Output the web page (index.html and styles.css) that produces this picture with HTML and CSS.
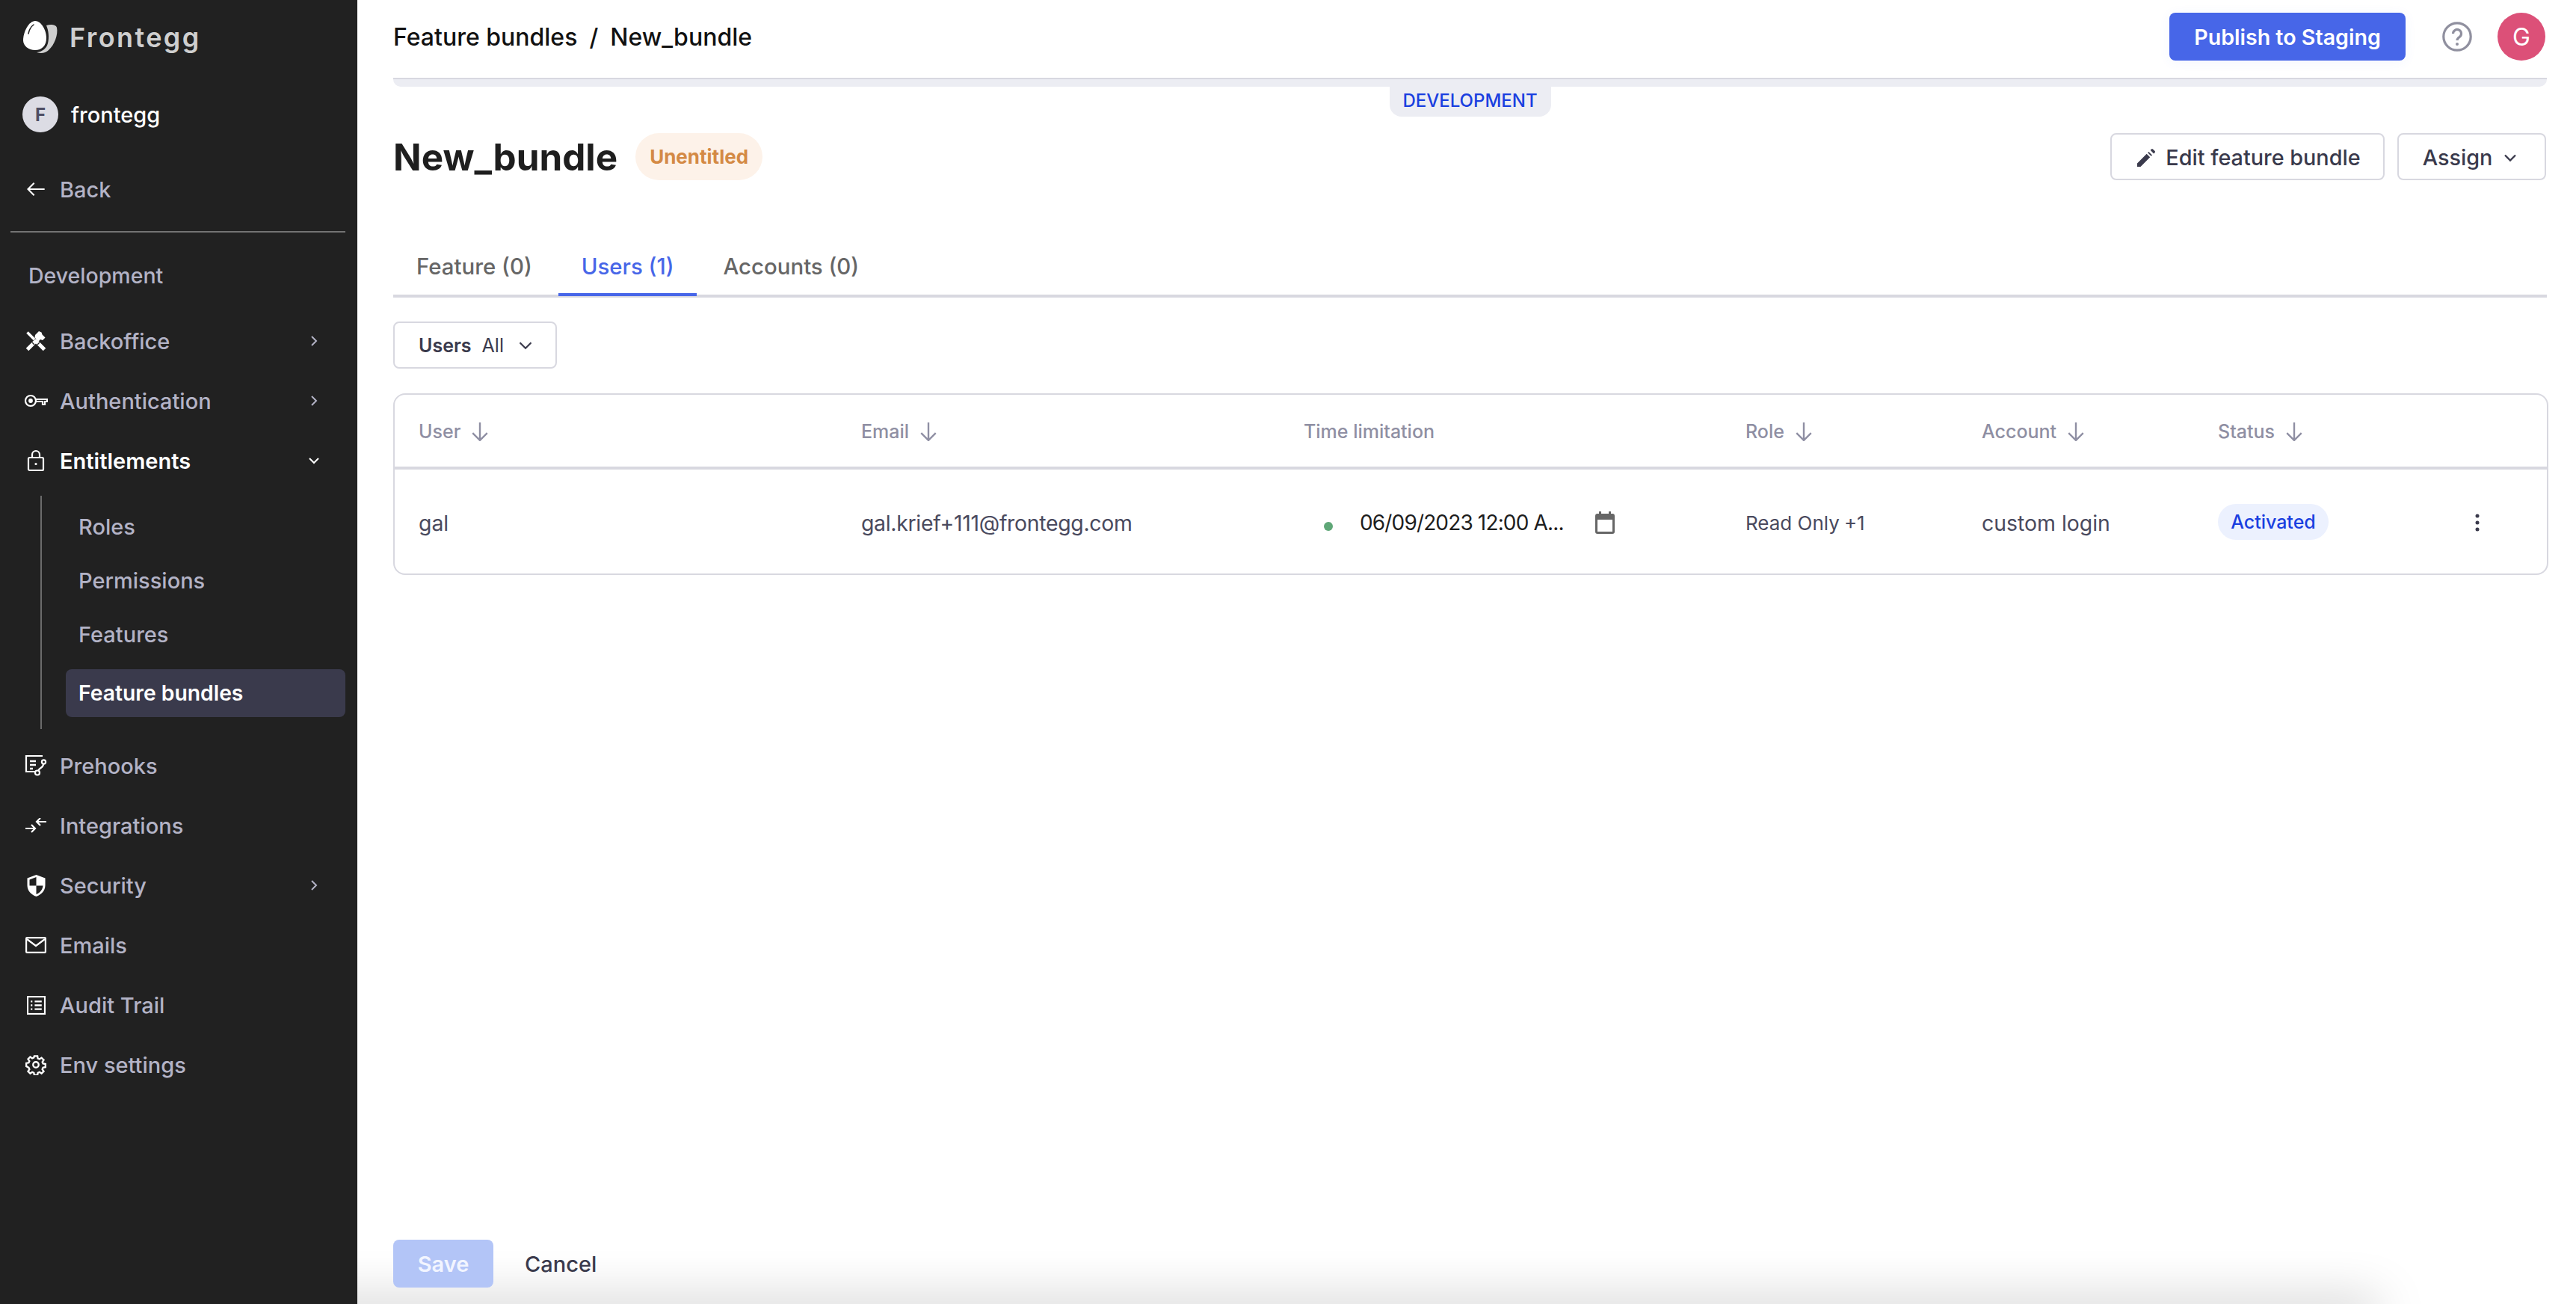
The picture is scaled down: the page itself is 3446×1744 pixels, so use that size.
FILE: index.html
```html
<!DOCTYPE html>
<html lang="en">
<head>
<meta charset="utf-8">
<title>New_bundle</title>
<link rel="stylesheet" href="styles.css">
</head>
<body>
<div class="app">
  <aside class="sidebar">
    <div class="brand">
      <svg class="logo" viewBox="0 0 48 46" width="48" height="46"><path fill="#cfcfcf" d="M32 7c6-2 13-1 14 3 2 9-3 23-11 30-4 4-10 5-16 3 8-1 13-5 15-12 2-8 1-17-2-24z"/><path fill="#fff" d="M17 1c8 0 15 12 15 23 0 10-6 16-15 16S1 34 1 27C1 15 9 1 17 1z"/><path fill="none" stroke="#212121" stroke-width="1.5" stroke-linecap="round" d="M8 18c1-5 3-9 7-12"/></svg>
      <span class="brand-name">Frontegg</span>
    </div>
    <div class="org">
      <span class="org-badge">F</span>
      <span class="org-name">frontegg</span>
    </div>
    <div class="back">
      <span class="nav-icon"><svg viewBox="0 0 24 24" width="28" height="28" fill="none" stroke="#fff" stroke-width="1.8"><path d="M22 12H3M10 5l-7 7 7 7"/></svg></span>
      <span>Back</span>
    </div>
    <div class="divider"></div>
    <div class="env">Development</div>
    <nav class="nav">
      <div class="nav-row"><span class="nav-icon"><svg viewBox="0 0 28 28" width="28" height="28" fill="none" stroke="#fff"><path stroke-width="5" d="M2.500 25.500L15 13"/><path stroke-width="5" d="M25.500 25.500L13 13"/><path stroke-width="3.600" d="M2.500 2.500L12 12"/><path fill="#fff" stroke="none" d="M13 6l5-5 3.500 1.500 1 3 4 4-3.500 3.500-3-1-2.500 2.500-5-5z"/><path stroke="#212121" stroke-width="1.400" d="M9 16l3 3M16 19l3-3"/></svg></span><span class="nav-label">Backoffice</span><svg class="chev" viewBox="0 0 24 24" width="24" height="24" fill="none" stroke="#b3b3c6" stroke-width="2"><path d="M9 6l6 6-6 6"/></svg></div>
      <div class="nav-row"><span class="nav-icon"><svg viewBox="0 0 32 24" width="32" height="24" fill="none" stroke="#fff" stroke-width="2.200"><circle cx="9" cy="12" r="7"/><circle cx="9" cy="12" r="1.800" fill="#fff"/><path d="M16 10h15v3h-3v4h-3v-4h-9"/></svg></span><span class="nav-label">Authentication</span><svg class="chev" viewBox="0 0 24 24" width="24" height="24" fill="none" stroke="#b3b3c6" stroke-width="2"><path d="M9 6l6 6-6 6"/></svg></div>
      <div class="nav-row is-open"><span class="nav-icon"><svg viewBox="0 0 24 30" width="24" height="30" fill="none" stroke="#fff" stroke-width="2.200"><rect x="2" y="11" width="20" height="17" rx="1.500"/><path d="M7 11V7a5 5 0 0 1 10 0v4"/><circle cx="12" cy="19.500" r="1.600" fill="#fff" stroke="none"/></svg></span><span class="nav-label">Entitlements</span><svg class="chev" viewBox="0 0 24 24" width="24" height="24" fill="none" stroke="#fff" stroke-width="2"><path d="M6 9l6 6 6-6"/></svg></div>
      <div class="sub">
        <div class="sub-row">Roles</div>
        <div class="sub-row">Permissions</div>
        <div class="sub-row">Features</div>
        <div class="sub-row is-active">Feature bundles</div>
      </div>
      <div class="nav-row"><span class="nav-icon"><svg viewBox="0 0 30 28" width="30" height="28" fill="none" stroke="#fff" stroke-width="2.200"><path d="M24 1H2v21h12"/><path d="M7 8h8M7 13h8M7 18h4" stroke-width="2.400"/><circle cx="25.500" cy="9" r="2.600"/><circle cx="17" cy="23.500" r="3"/><path d="M25 12c0 5-5 4-7 9"/></svg></span><span class="nav-label">Prehooks</span></div>
      <div class="nav-row"><span class="nav-icon"><svg viewBox="0 0 28 20" width="28" height="20" fill="none" stroke="#fff" stroke-width="2.200"><path d="M0 14h12M8 9l5 5-5 5M28 5H16M20 0l-5 5 5 5"/></svg></span><span class="nav-label">Integrations</span></div>
      <div class="nav-row"><span class="nav-icon"><svg viewBox="0 0 24 29" width="25" height="29" fill="#fff"><path d="M12 0L0 4.500V14c0 7 5 12.500 12 15 7-2.500 12-8 12-15V4.500zm0 14.500H3V6.500L12 3zm0 0h9c-.5 5.500-4 9.500-9 11.500z"/></svg></span><span class="nav-label">Security</span><svg class="chev" viewBox="0 0 24 24" width="24" height="24" fill="none" stroke="#b3b3c6" stroke-width="2"><path d="M9 6l6 6-6 6"/></svg></div>
      <div class="nav-row"><span class="nav-icon"><svg viewBox="0 0 28 22" width="28" height="22" fill="none" stroke="#fff" stroke-width="2.200"><rect x="1.100" y="1.100" width="25.800" height="19.800" rx="1"/><path d="M2 3l12 9 12-9"/></svg></span><span class="nav-label">Emails</span></div>
      <div class="nav-row"><span class="nav-icon"><svg viewBox="0 0 24 24" width="25" height="25" fill="none" stroke="#fff" stroke-width="2"><rect x="1" y="1" width="22" height="22"/><path d="M5 7h2M10 7h9M5 12h2M10 12h9M5 17h2M10 17h9" stroke-width="2.200"/></svg></span><span class="nav-label">Audit Trail</span></div>
      <div class="nav-row"><span class="nav-icon"><svg viewBox="0 0 24 24" width="28" height="28" fill="none" stroke="#fff" stroke-width="2"><circle cx="12" cy="12" r="3.200"/><path d="M10.200 2h3.600l.5 2.800 1.900.8 2.300-1.600 2.500 2.500-1.600 2.300.8 1.900 2.800.5v3.600l-2.800.5-.8 1.900 1.600 2.300-2.500 2.500-2.300-1.600-1.900.8-.5 2.800h-3.600l-.5-2.800-1.900-.8-2.300 1.600-2.500-2.500 1.600-2.300-.8-1.900L1 13.800v-3.600l2.800-.5.8-1.900L3 5.500 5.500 3l2.300 1.600 1.900-.8z"/></svg></span><span class="nav-label">Env settings</span></div>
    </nav>
  </aside>

  <main class="main">
    <header class="topbar">
      <div class="crumbs"><span>Feature bundles</span><span>/</span><span>New_bundle</span></div>
      <div class="top-actions">
        <button class="btn-primary">Publish to Staging</button>
        <svg class="help" viewBox="0 0 40 40" width="40" height="40"><circle cx="20" cy="20" r="18.200" fill="none" stroke="#90909f" stroke-width="3.200"/><path d="M14.500 16a5.500 5.500 0 1 1 8.500 4.600c-2 1.300-3 2.300-3 4.400" fill="none" stroke="#90909f" stroke-width="3.200"/><circle cx="20" cy="30" r="2" fill="#90909f"/></svg>
        <span class="avatar">G</span>
      </div>
    </header>
    <div class="env-band"><span class="env-tag">DEVELOPMENT</span></div>

    <section class="page-head">
      <div class="title-wrap">
        <h1 class="title">New_bundle</h1>
        <span class="badge">Unentitled</span>
      </div>
      <div class="head-actions">
        <button class="btn-outline btn-edit"><svg viewBox="0 0 24 24" width="32" height="32" fill="#3a3a4c"><path d="M3 17.600V21h3.400L15.900 11.500 12.500 8.100zM13.600 7l3.400 3.400 1-1-3.400-3.400zM16.200 4.400l3.400 3.400 1.100-1.100a1 1 0 0 0 0-1.400l-2-2a1 1 0 0 0-1.400 0z"/></svg>Edit feature bundle</button>
        <button class="btn-outline btn-assign">Assign<svg viewBox="0 0 24 24" width="28" height="28" fill="none" stroke="#3a3a4c" stroke-width="2"><path d="M6 9l6 6 6-6"/></svg></button>
      </div>
    </section>

    <div class="tabs">
      <div class="tab">Feature (0)</div>
      <div class="tab is-active">Users (1)</div>
      <div class="tab">Accounts (0)</div>
    </div>

    <div class="filter-row">
      <button class="filter"><span class="filter-name">Users</span><span class="filter-value">All</span><svg viewBox="0 0 24 24" width="30" height="30" fill="none" stroke="#3a3a4c" stroke-width="1.800"><path d="M6 9l6 6 6-6"/></svg></button>
    </div>

    <div class="table">
      <div class="tr th">
        <div class="cell">User<svg class="sort" viewBox="0 0 24 24" width="26" height="26" fill="none" stroke="#8f8fa3" stroke-width="2.200"><path d="M12 1v22M3 14l9 9 9-9"/></svg></div>
        <div class="cell">Email<svg class="sort" viewBox="0 0 24 24" width="26" height="26" fill="none" stroke="#8f8fa3" stroke-width="2.200"><path d="M12 1v22M3 14l9 9 9-9"/></svg></div>
        <div class="cell">Time limitation</div>
        <div class="cell">Role<svg class="sort" viewBox="0 0 24 24" width="26" height="26" fill="none" stroke="#8f8fa3" stroke-width="2.200"><path d="M12 1v22M3 14l9 9 9-9"/></svg></div>
        <div class="cell">Account<svg class="sort" viewBox="0 0 24 24" width="26" height="26" fill="none" stroke="#8f8fa3" stroke-width="2.200"><path d="M12 1v22M3 14l9 9 9-9"/></svg></div>
        <div class="cell">Status<svg class="sort" viewBox="0 0 24 24" width="26" height="26" fill="none" stroke="#8f8fa3" stroke-width="2.200"><path d="M12 1v22M3 14l9 9 9-9"/></svg></div>
      </div>
      <div class="tr td">
        <div class="cell">gal</div>
        <div class="cell cell-email">gal.krief+111@frontegg.com</div>
        <div class="cell cell-time">
          <span class="dot"></span>
          <span class="date">06/09/2023 12:00 A...</span>
          <svg class="cal" viewBox="0 0 26 30" width="26" height="30"><path fill="#666" d="M5 0h3v3h10V0h3v3h2a3 3 0 0 1 3 3v21a3 3 0 0 1-3 3H3a3 3 0 0 1-3-3V6a3 3 0 0 1 3-3h2zM3 11v16h20V11z"/></svg>
        </div>
        <div class="cell cell-role"><span>Read Only</span><span>+1</span></div>
        <div class="cell">custom login</div>
        <div class="cell"><span class="pill">Activated</span></div>
        <div class="cell cell-menu"><svg viewBox="0 0 6 24" width="6" height="24" fill="#3a3a4c"><circle cx="3" cy="3" r="2.500"/><circle cx="3" cy="12" r="2.500"/><circle cx="3" cy="21" r="2.500"/></svg></div>
      </div>
    </div>

    <footer class="footer">
      <button class="btn-save">Save</button>
      <button class="btn-cancel">Cancel</button>
    </footer>
  </main>
</div>
</body>
</html>
```

FILE: styles.css
```css
* { box-sizing: border-box; }
html, body { margin: 0; height: 100%; overflow: hidden; }
body { font-family: Inter, "Noto Sans", "Liberation Sans", sans-serif; background: #fff; color: #1e1e1e; }
button { font-family: inherit; cursor: pointer; }

.app { display: flex; height: 1744px; width: 3446px; }

.sidebar { width: 478px; flex: none; background: #212121; color: #b3b3c6; font-size: 29px; font-weight: 500; position: relative; z-index: 2; }
.brand { height: 100px; display: flex; align-items: center; padding-left: 30px; gap: 15px; }
.logo { flex: none; }
.brand-name { font-size: 36px; font-weight: 600; letter-spacing: 2.4px; color: #cfcfcf; }
.org { height: 106px; display: flex; align-items: center; padding-left: 30px; gap: 17px; }
.org-badge { width: 48px; height: 48px; border-radius: 50%; background: #dcdce4; color: #4e4e64; font-size: 24px; font-weight: 700; display: flex; align-items: center; justify-content: center; }
.org-name { color: #fff; }
.back { height: 94px; display: flex; align-items: center; padding-left: 32px; }
.divider { height: 2px; margin: 9px 16px 0 14px; background: #737373; }
.env { height: 105px; padding: 9px 0 0 38px; display: flex; align-items: center; font-size: 28.5px; }
.nav-row { height: 80px; display: flex; align-items: center; padding-left: 32px; position: relative; }
.nav-icon { width: 32px; height: 32px; margin-right: 16px; flex: none; display: flex; align-items: center; justify-content: center; }
.nav-label { flex: 1; }
.chev { margin-right: 46px; flex: none; }
.is-open { color: #fff; font-weight: 600; }
.sub { margin: 7px 0 9px 54px; height: 312px; border-left: 2px solid #6b6b6b; padding: 5px 16px 0 32px; }
.sub-row { height: 72px; display: flex; align-items: center; padding-left: 17px; }
.sub-row.is-active { height: 64px; margin: 11px 0 0 0; background: #3a3a4c; color: #fff; font-weight: 600; font-size: 28.3px; border-radius: 8px; }

.main { flex: 1; min-width: 0; display: flex; flex-direction: column; }
.topbar { height: 104px; display: flex; align-items: center; justify-content: space-between; padding: 0 41px 6px 48px; }
.crumbs { display: flex; gap: 16px; font-size: 32px; font-weight: 500; color: #111; }
.top-actions { display: flex; align-items: center; }
.btn-primary { width: 316px; height: 64px; border: 0; border-radius: 8px; background: #4766e8; color: #fff; font-size: 28.6px; font-weight: 600; box-shadow: 0 2px 16px rgba(71,102,232,.06); margin-right: 49px; }
.help { flex: none; margin-right: 34px; }
.avatar { width: 64px; height: 64px; border-radius: 50%; background: #dc5078; color: #fff; font-size: 32px; display: flex; align-items: center; justify-content: center; }

.env-band { height: 12px; margin: 0 39px 0 48px; background: #ecedf3; border-top: 2px solid #d8d8e0; border-radius: 0 0 10px 10px; position: relative; }
.env-tag { position: absolute; left: 50%; top: 0; transform: translateX(-50%); width: 216px; height: 50px; padding-top: 6px; display: flex; align-items: center; justify-content: center; background: #ecedf3; border-radius: 0 0 16px 16px; color: #1a3fe0; font-size: 24px; font-weight: 500; }

.page-head { margin: 62px 40px 0 48px; height: 63px; display: flex; align-items: center; justify-content: space-between; }
.title-wrap { display: flex; align-items: center; gap: 24px; }
.title { margin: 0; font-size: 49.4px; font-weight: 700; color: #1e1e1e; }
.badge { width: 170px; height: 63px; border-radius: 32px; background: #fdf2e9; color: #d48a45; font-size: 26px; font-weight: 700; display: flex; align-items: center; justify-content: center; }
.head-actions { display: flex; gap: 17px; }
.btn-outline { height: 63px; padding: 2px 0 0; background: #fff; border: 2px solid #d8d8e0; border-radius: 8px; color: #3a3a4c; font-size: 28.8px; font-weight: 500; display: flex; align-items: center; justify-content: center; }
.btn-edit { width: 367px; gap: 10px; }
.btn-assign { width: 199px; gap: 10px; }

.tabs { margin: 75px 39px 0 48px; height: 82px; border-bottom: 4px solid #d8d8e0; display: flex; gap: 4px; }
.tab { padding: 2px 31px 0; height: 78px; display: flex; align-items: center; font-size: 29.4px; font-weight: 500; color: #666; position: relative; }
.tab.is-active { color: #4766e8; }
.tab.is-active::after { content: ""; position: absolute; left: 0; right: 0; bottom: -2px; height: 4px; background: #4766e8; }

.filter-row { margin: 32px 0 0 48px; display: flex; }
.filter { width: 219px; height: 63px; background: #fff; border: 2px solid #d8d8e0; border-radius: 8px; display: flex; align-items: center; padding: 0 0 0 32px; font-size: 25px; color: #3a3a4c; }
.filter-name { font-weight: 600; margin-right: 14px; }
.filter-value { margin-right: 14px; }

.table { margin: 33px 37px 0 48px; height: 243px; border: 2px solid #d8d8e0; border-radius: 16px; }
.tr { display: grid; grid-template-columns: 592px 592px 591px 316px 316px 331px 32px 1fr; padding-left: 32px; }
.th { height: 100px; padding-top: 2px; border-bottom: 4px solid #d8d8e0; color: #8f8fa3; font-size: 25px; font-weight: 500; }
.td { height: 139px; padding-top: 3px; color: #4a4a5e; font-size: 28.4px; }
.cell { display: flex; align-items: center; gap: 13px; min-width: 0; white-space: nowrap; }
.sort { flex: none; }
.cell-email { letter-spacing: -0.3px; }
.cell-time { padding-left: 27px; gap: 8px; }
.dot { width: 12px; height: 12px; border-radius: 50%; background: #5fa777; margin: 10px 28px 0 0; flex: none; }
.date { width: 307px; color: #1e1e1e; flex: none; font-size: 28px; letter-spacing: -0.85px; }
.cal { flex: none; }
.cell-role { font-size: 26px; gap: 6px; }
.pill { height: 48px; width: 148px; border-radius: 24px; background: #ecf1fe; color: #1a3fe0; font-size: 25px; font-weight: 500; display: flex; align-items: center; justify-content: center; margin-top: -2px; }
.cell-menu { justify-content: center; }

.footer { margin-top: auto; height: 86px; padding: 0 0 22px 48px; display: flex; align-items: flex-start; position: relative; gap: 42px; }
.footer::after { content: ""; position: absolute; left: -100px; right: 266px; top: 100%; height: 20px; border-radius: 40px; box-shadow: 0 0 64px 4px rgba(0,0,0,.26); }
.btn-save { width: 134px; height: 64px; border: 0; border-radius: 8px; background: #b3c5f7; color: #f2f5ff; font-size: 29px; font-weight: 600; position: relative; z-index: 1; }
.btn-cancel { height: 64px; padding: 0; border: 0; background: none; color: #3a3a4c; font-size: 29px; font-weight: 500; position: relative; z-index: 1; }
```
